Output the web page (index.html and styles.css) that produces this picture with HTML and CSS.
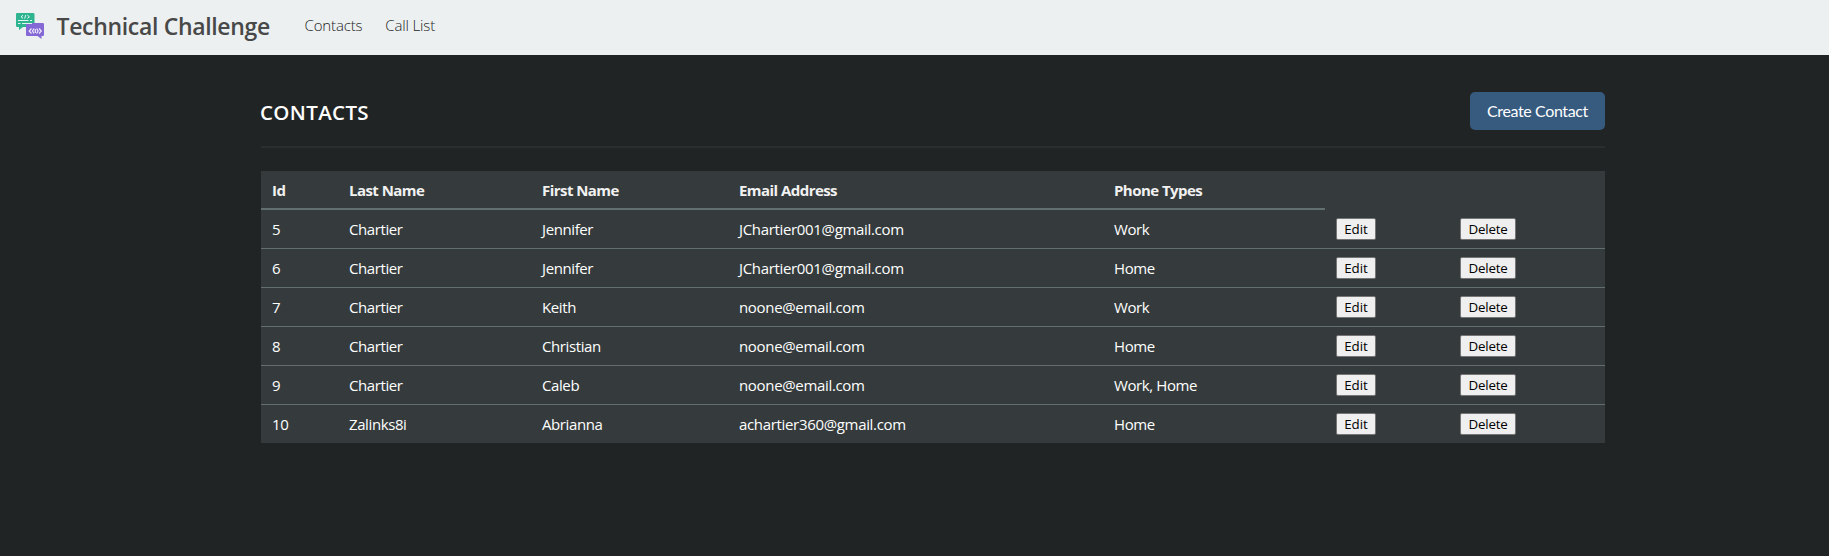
FILE: index.html
```
<!DOCTYPE html>
<html lang="en">
<head>
<meta charset="utf-8">
<title>Technical Challenge</title>
<link rel="stylesheet" href="styles.css">
</head>
<body>
<header class="navbar">
  <svg class="logo" viewBox="0 0 28 26" aria-hidden="true">
    <path fill="#2fb491" d="M0 1q0-1 1-1h16q1.500 0 1.500 1v12q0 1-1 1H7l-4 3v-3H1q-1 0-1-1z"/>
    <path fill="#8468d6" d="M11 10h15.500q1.500 0 1.500 1v11q0 1-1 1h-1.500v3l-4-3H11q-1 0-1-1V11q0-1 1-1z"/>
    <path fill="none" stroke="#e4f6f0" stroke-width="1" d="M7 2.200 5 3.800l2 1.600M9.800 2 8.600 5.600M11.400 2.200l2 1.600-2 1.600M2 7.500h10.500M14 7.500h2M2 10.500h2.500M6 10.500h10"/>
    <path fill="none" stroke="#eee8ff" stroke-width="1.200" d="m15.500 15.500-2.300 2.500 2.300 2.500M18 15.500 16.500 18l1.500 2.500M19.300 16v4M20.600 15.500l1.500 2.500-1.500 2.500M23 15.500l2.300 2.500-2.300 2.500"/>
  </svg>
  <a class="brand">Technical Challenge</a>
  <nav class="links"><a>Contacts</a><a>Call List</a></nav>
</header>
<main class="container">
  <div class="heading">
    <h1>CONTACTS</h1>
    <a class="create">Create Contact</a>
  </div>
  <table class="contacts">
    <colgroup><col class="id"><col class="last"><col class="first"><col class="email"><col class="phone"><col class="edit"><col class="delete"></colgroup>
    <thead><tr><th>Id</th><th>Last Name</th><th>First Name</th><th>Email Address</th><th>Phone Types</th><td></td><td></td></tr></thead>
    <tbody>
      <tr><td>5</td><td>Chartier</td><td>Jennifer</td><td>JChartier001@gmail.com</td><td>Work</td><td><button>Edit</button></td><td><button>Delete</button></td></tr>
      <tr><td>6</td><td>Chartier</td><td>Jennifer</td><td>JChartier001@gmail.com</td><td>Home</td><td><button>Edit</button></td><td><button>Delete</button></td></tr>
      <tr><td>7</td><td>Chartier</td><td>Keith</td><td>noone@email.com</td><td>Work</td><td><button>Edit</button></td><td><button>Delete</button></td></tr>
      <tr><td>8</td><td>Chartier</td><td>Christian</td><td>noone@email.com</td><td>Home</td><td><button>Edit</button></td><td><button>Delete</button></td></tr>
      <tr><td>9</td><td>Chartier</td><td>Caleb</td><td>noone@email.com</td><td>Work, Home</td><td><button>Edit</button></td><td><button>Delete</button></td></tr>
      <tr><td>10</td><td>Zalinks8i</td><td>Abrianna</td><td>achartier360@gmail.com</td><td>Home</td><td><button>Edit</button></td><td><button>Delete</button></td></tr>
    </tbody>
  </table>
</main>
</body>
</html>
```
FILE: styles.css
```
* { box-sizing: border-box; }
body { margin: 0; min-height: 556px; background: #212425; color: #fff; font: 15px/22px "Open Sans", "Noto Sans", sans-serif; }
.navbar { display: flex; align-items: center; height: 55px; padding: 0 16px; background: #ecf0f1; color: #484848; }
.logo { width: 28px; height: 26px; margin-bottom: 4px; }
.brand { width: 213px; margin-left: 12.500px; font-size: 23px; font-weight: 600; line-height: 30px; padding-bottom: 3px; letter-spacing: -0.330px; white-space: nowrap; }
.links { display: flex; gap: 23px; margin-left: 35px; padding-bottom: 5px; font-weight: 300; letter-spacing: -0.150px; color: #222; }
.container { width: 1344px; margin-left: 261px; }
.heading { display: flex; justify-content: space-between; align-items: center; height: 93px; padding-top: 21px; border-bottom: 2px solid #2a2e2f; margin-bottom: 23px; }
h1 { margin: 1px 0 0 -1px; font-size: 20.500px; font-weight: 600; line-height: 28px; letter-spacing: 0.350px; }
.create { width: 135px; height: 38px; border-radius: 5px; background: #375a7f; text-align: center; font: 16px/38px Lato, sans-serif; letter-spacing: -0.380px; }
.contacts { width: 1344px; table-layout: fixed; border-collapse: separate; border-spacing: 0; background: #353b3c; letter-spacing: -0.400px; }
.id { width: 77px; }
.last { width: 193px; }
.first { width: 197px; }
.email { width: 375px; }
.phone { width: 222px; }
.edit { width: 124px; }
.delete { width: 156px; }
th, td { height: 39px; padding: 0 11px; text-align: left; vertical-align: middle; }
td:nth-child(4) { letter-spacing: -0.330px; }
th { border-bottom: 2px solid #626e70; font-weight: 700; color: #f1f1f1; letter-spacing: -0.550px; }
tbody td { border-bottom: 1px solid #626e70; }
tbody tr:last-child td { height: 38px; border-bottom: 0; }
button { display: block; height: 22px; padding: 0 7px; border: 1px solid #767676; border-radius: 2px; background: #efefef; color: #000; font: 13.333px/18px "Open Sans", sans-serif; }
td:nth-child(6) button { width: 40px; }
td:nth-child(7) button { width: 56px; letter-spacing: -0.200px; }
```
